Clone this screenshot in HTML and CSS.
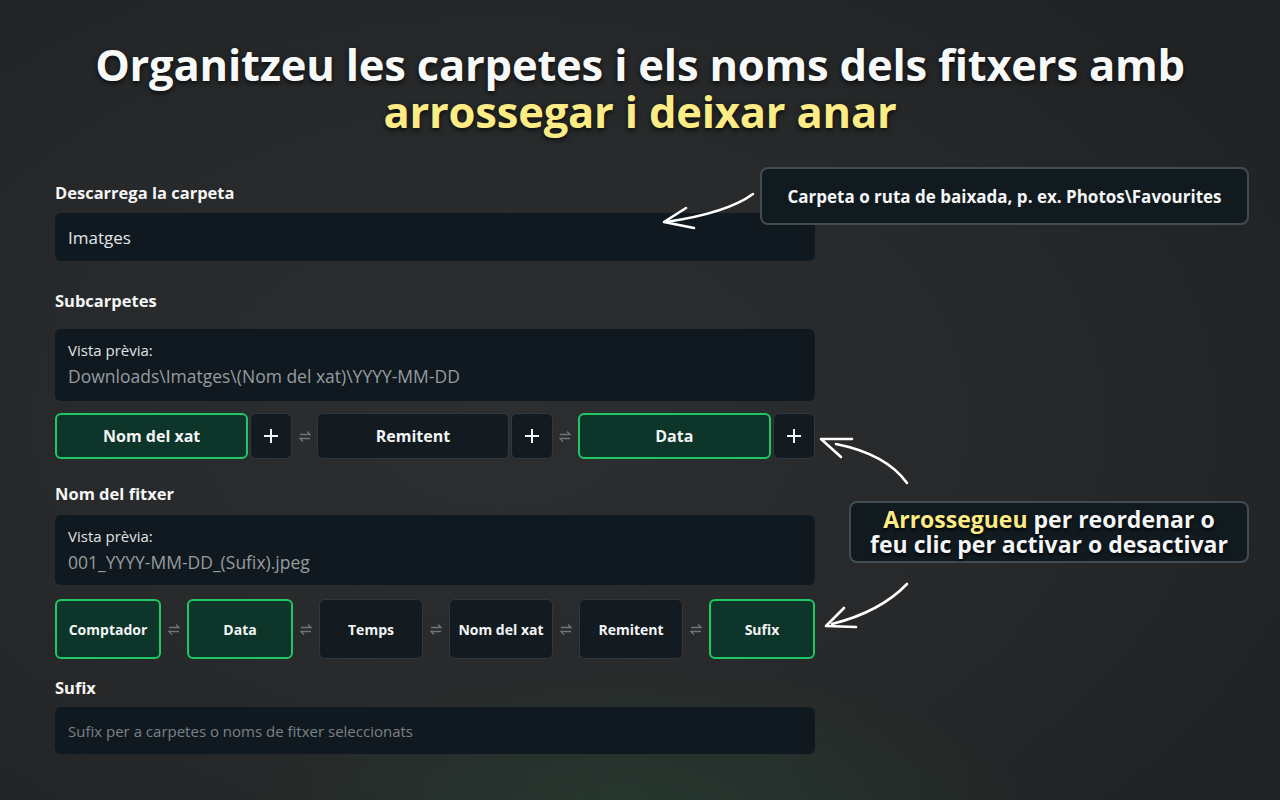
FILE: index.html
```html
<!DOCTYPE html>
<html lang="ca">
<head>
<meta charset="utf-8">
<title>Organitzeu les carpetes</title>
<link rel="stylesheet" href="styles.css">
</head>
<body>
<div class="page">
  <h1 class="title"><span class="t1">Organitzeu les carpetes i els noms dels fitxers amb</span><span class="t2 hl">arrossegar i deixar anar</span></h1>

  <div class="form">
    <div class="label l1">Descarrega la carpeta</div>
    <div class="input"><span class="val">Imatges</span></div>

    <div class="label l2">Subcarpetes</div>
    <div class="preview p1">
      <div class="pv-title">Vista prèvia:</div>
      <div class="pv-text">Downloads\Imatges\(Nom del xat)\YYYY-MM-DD</div>
    </div>
    <div class="row row1">
      <div class="chip on">Nom del xat</div>
      <div class="plus"><svg width="16" height="16" viewBox="0 0 16 16"><path d="M8 1V15M1 8H15" stroke="#f2f4f5" stroke-width="2" fill="none"/></svg></div>
      <div class="swap"><svg width="12" height="13" viewBox="0 0 12 13"><path d="M1 4.5H11L8 1.5M11 8.5H1L4 11.5" stroke="#6f7479" stroke-width="1.3" fill="none"/></svg></div>
      <div class="chip">Remitent</div>
      <div class="plus"><svg width="16" height="16" viewBox="0 0 16 16"><path d="M8 1V15M1 8H15" stroke="#f2f4f5" stroke-width="2" fill="none"/></svg></div>
      <div class="swap"><svg width="12" height="13" viewBox="0 0 12 13"><path d="M1 4.5H11L8 1.5M11 8.5H1L4 11.5" stroke="#6f7479" stroke-width="1.3" fill="none"/></svg></div>
      <div class="chip on">Data</div>
      <div class="plus"><svg width="16" height="16" viewBox="0 0 16 16"><path d="M8 1V15M1 8H15" stroke="#f2f4f5" stroke-width="2" fill="none"/></svg></div>
    </div>

    <div class="label l3">Nom del fitxer</div>
    <div class="preview p2">
      <div class="pv-title">Vista prèvia:</div>
      <div class="pv-text">001_YYYY-MM-DD_(Sufix).jpeg</div>
    </div>
    <div class="row row2">
      <div class="chip sm on">Comptador</div>
      <div class="swap w"><svg width="12" height="13" viewBox="0 0 12 13"><path d="M1 4.5H11L8 1.5M11 8.5H1L4 11.5" stroke="#6f7479" stroke-width="1.3" fill="none"/></svg></div>
      <div class="chip sm on">Data</div>
      <div class="swap w"><svg width="12" height="13" viewBox="0 0 12 13"><path d="M1 4.5H11L8 1.5M11 8.5H1L4 11.5" stroke="#6f7479" stroke-width="1.3" fill="none"/></svg></div>
      <div class="chip sm">Temps</div>
      <div class="swap w"><svg width="12" height="13" viewBox="0 0 12 13"><path d="M1 4.5H11L8 1.5M11 8.5H1L4 11.5" stroke="#6f7479" stroke-width="1.3" fill="none"/></svg></div>
      <div class="chip sm">Nom del xat</div>
      <div class="swap w"><svg width="12" height="13" viewBox="0 0 12 13"><path d="M1 4.5H11L8 1.5M11 8.5H1L4 11.5" stroke="#6f7479" stroke-width="1.3" fill="none"/></svg></div>
      <div class="chip sm">Remitent</div>
      <div class="swap w"><svg width="12" height="13" viewBox="0 0 12 13"><path d="M1 4.5H11L8 1.5M11 8.5H1L4 11.5" stroke="#6f7479" stroke-width="1.3" fill="none"/></svg></div>
      <div class="chip sm on">Sufix</div>
    </div>

    <div class="label l4">Sufix</div>
    <div class="input in2"><span class="ph">Sufix per a carpetes o noms de fitxer seleccionats</span></div>
  </div>

  <div class="callout c1"><div>Carpeta o ruta de baixada, p. ex. Photos\Favourites</div></div>
  <div class="callout c2"><div><div class="cl"><span class="hl">Arrossegueu</span> per reordenar o</div><div class="cl">feu clic per activar o desactivar</div></div></div>

  <svg class="arrows" width="1280" height="800" viewBox="0 0 1280 800">
    <g stroke="#ffffff" stroke-width="2.6" fill="none" stroke-linecap="round" stroke-linejoin="round">
      <path d="M753 194 Q727 213 666 222"/>
      <path d="M686 208 L664 222 L694 228"/>
      <path d="M907 483 Q886 454 836 444"/>
      <path d="M852 439 L821 439 L841 457"/>
      <path d="M907 584 Q880 612 832 624"/>
      <path d="M844 608 L826 626 L856 627"/>
    </g>
  </svg>
</div>
</body>
</html>
```

FILE: styles.css
```css
* { box-sizing: border-box; }
html, body { margin: 0; padding: 0; }
body {
  width: 1280px;
  height: 800px;
  overflow: hidden;
  font-family: "Open Sans", "Noto Sans", "DejaVu Sans", sans-serif;
  color: #f4f5f6;
}
.page {
  position: relative;
  width: 1280px;
  height: 800px;
  overflow: hidden;
  background:
    radial-gradient(ellipse 420px 160px at 640px 820px, rgba(40, 90, 60, 0.35), rgba(40, 90, 60, 0) 100%),
    radial-gradient(ellipse 900px 600px at 500px 420px, #2c2e30 0%, #262829 60%, #202224 100%);
  padding-top: 41px;
}
.title {
  margin: 0;
  text-align: center;
  font-size: 43.5px;
  font-weight: 700;
  letter-spacing: -0.2px;
  color: #f7f8f8;
  text-shadow: 0 2px 5px rgba(0, 0, 0, 0.75);
  display: flex;
  flex-direction: column;
  align-items: center;
}
.t1, .t2 {
  display: block;
  height: 47px;
  line-height: 47px;
}
.hl { color: #fdec86; }

.form {
  width: 760px;
  margin-left: 55px;
  margin-top: 46px;
}
.label {
  font-size: 16.5px;
  line-height: 24px;
  font-weight: 700;
  color: #f4f5f6;
}
.l1 { margin-bottom: 8px; }
.l2 { margin-top: 28px; margin-bottom: 16px; }
.l3 { margin-top: 23px; margin-bottom: 9px; }
.l4 { margin-top: 17px; margin-bottom: 7px; }

.input {
  height: 48px;
  background: #101920;
  border-radius: 6px;
  display: flex;
  align-items: center;
  padding-left: 13px;
}
.in2 { height: 47px; }
.val { font-size: 17px; color: #e3e6e8; }
.ph { font-size: 15px; color: #7c8286; }

.preview {
  background: #101920;
  border-radius: 6px;
  padding: 11px 13px 0;
}
.p1 { height: 72px; }
.p2 { height: 70px; }
.pv-title { font-size: 15px; line-height: 20px; color: #e0e3e5; }
.pv-text { font-size: 17.5px; line-height: 26px; margin-top: 3px; color: #979c9f; }

.row {
  display: flex;
  align-items: stretch;
}
.row1 { height: 46px; margin-top: 12px; gap: 2px; }
.row2 { height: 60px; margin-top: 14px; }

.chip {
  flex: 1 1 0;
  display: flex;
  align-items: center;
  justify-content: center;
  background: #131b21;
  border: 1px solid #30383d;
  border-radius: 6px;
  font-size: 16px;
  font-weight: 700;
  color: #f2f4f5;
}
.chip.sm { font-size: 14px; }
.chip.on {
  background: #0d3529;
  border: 2px solid #1fc865;
}
.plus {
  width: 42px;
  flex: 0 0 42px;
  display: flex;
  align-items: center;
  justify-content: center;
  background: #131b21;
  border: 1px solid #30383d;
  border-radius: 6px;
}
.swap {
  flex: 0 0 21px;
  display: flex;
  align-items: center;
  justify-content: center;
}
.swap.w { flex: 0 0 26px; }

.callout {
  position: absolute;
  background: #111a1f;
  border: 2px solid #434c51;
  border-radius: 8px;
  font-weight: 700;
  color: #f4f5f6;
  text-align: center;
  display: flex;
  align-items: center;
  justify-content: center;
}
.c1 {
  left: 760px;
  top: 167px;
  width: 489px;
  height: 58px;
  font-size: 17px;
}
.c2 {
  left: 849px;
  top: 501px;
  width: 400px;
  height: 62px;
  font-size: 23px;
  text-shadow: 0 2px 3px rgba(0, 0, 0, 0.8);
}
.cl {
  height: 25px;
  line-height: 25px;
}
.arrows {
  position: absolute;
  left: 0;
  top: 0;
  pointer-events: none;
}
```
